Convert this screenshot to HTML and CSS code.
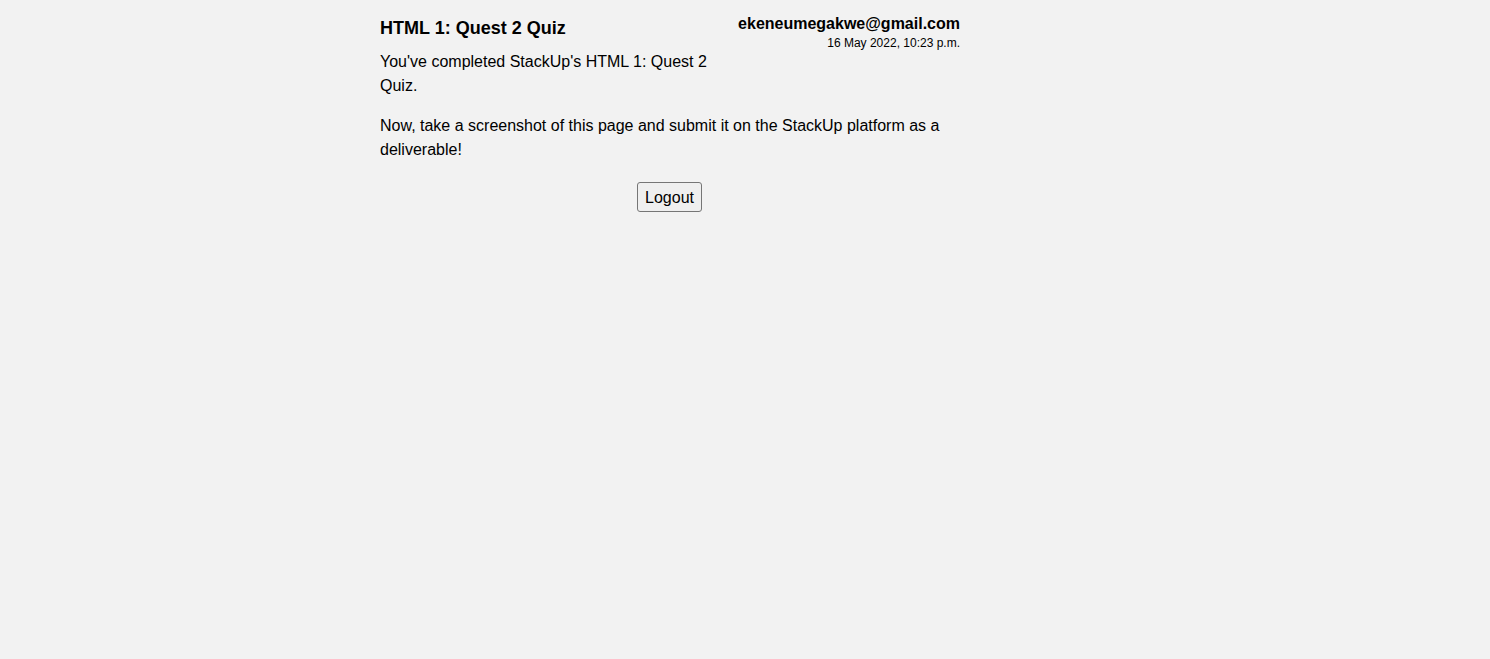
FILE: index.html
```html
<!DOCTYPE html>
<html lang="en">
<head>
<meta charset="utf-8">
<title>HTML 1: Quest 2 Quiz</title>
<link rel="stylesheet" href="styles.css">
</head>
<body>
<main class="page">
  <div class="header">
    <div class="intro">
      <h1 class="title">HTML 1: Quest 2 Quiz</h1>
      <p class="text first">You've completed StackUp's HTML 1: Quest 2 Quiz.</p>
    </div>
    <div class="user">
      <div class="email">ekeneumegakwe@gmail.com</div>
      <div class="date">16 May 2022, 10:23 p.m.</div>
    </div>
  </div>
  <p class="text second">Now, take a screenshot of this page and submit it on the StackUp platform as a deliverable!</p>
  <div class="actions">
    <button class="logout" type="button">Logout</button>
  </div>
</main>
</body>
</html>
```

FILE: styles.css
```css
html, body {
  margin: 0;
  padding: 0;
  background: #f2f2f2;
}
body {
  font-family: "Liberation Sans", Arial, sans-serif;
  color: #000;
}
.page {
  width: 580px;
  margin-left: 380px;
}
.header {
  display: flex;
  justify-content: space-between;
  align-items: flex-start;
}
.intro {
  flex: 1;
  min-width: 0;
}
.title {
  margin: 17px 0 0;
  font-size: 18px;
  font-weight: bold;
  line-height: 22px;
}
.text {
  font-size: 16px;
  line-height: 24px;
  margin: 0;
}
.first {
  margin-top: 11px;
}
.second {
  margin-top: 16px;
}
.user {
  text-align: right;
  padding-top: 15px;
}
.email {
  font-size: 16px;
  font-weight: bold;
  line-height: 18px;
}
.date {
  font-size: 12px;
  line-height: 14px;
  margin-top: 3px;
}
.actions {
  display: flex;
  justify-content: center;
  margin-top: 20px;
}
.logout {
  font-family: "Liberation Sans", Arial, sans-serif;
  font-size: 16px;
  padding: 5px 7px 4px 7px;
  margin-right: 1px;
  line-height: 19px;
  color: #000;
  background: #efefef;
  border: 1px solid #767676;
  border-radius: 3px;
}
```
